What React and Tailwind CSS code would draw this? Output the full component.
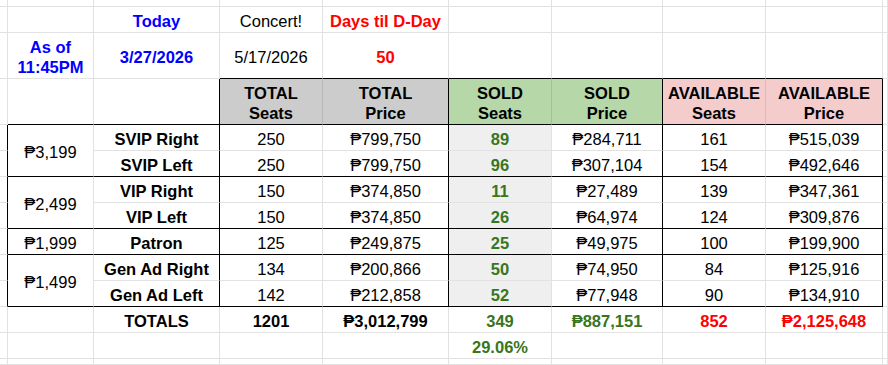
import React from "react";
import clsx from "clsx";

const R = { g: "border-r-[#e2e2e2]", k: "border-r-black", d: "border-r-black/10" };
const B = { g: "border-b-[#e2e2e2]", k: "border-b-black" };

function C({ children, r = "g", b = "g", bg, color, bold, span, two }) {
  return (
    <div
      className={clsx(
        "flex items-center justify-center text-center border-r border-b leading-[20px] overflow-hidden whitespace-nowrap",
        two ? "pt-[2px] whitespace-pre-line" : "pt-[3px]",
        R[r],
        B[b],
        bg,
        color,
        bold && "font-bold",
        span && "row-span-2"
      )}
    >
      {children}
    </div>
  );
}

const BLUE = "text-[#0000ff]";
const RED = "text-[#ff0000]";
const GREEN = "text-[#38761d]";

const groups = [
  {
    price: "₱3,199",
    rows: [
      ["SVIP Right", "250", "₱799,750", "89", "₱284,711", "161", "₱515,039"],
      ["SVIP Left", "250", "₱799,750", "96", "₱307,104", "154", "₱492,646"],
    ],
  },
  {
    price: "₱2,499",
    rows: [
      ["VIP Right", "150", "₱374,850", "11", "₱27,489", "139", "₱347,361"],
      ["VIP Left", "150", "₱374,850", "26", "₱64,974", "124", "₱309,876"],
    ],
  },
  {
    price: "₱1,999",
    rows: [["Patron", "125", "₱249,875", "25", "₱49,975", "100", "₱199,900"]],
  },
  {
    price: "₱1,499",
    rows: [
      ["Gen Ad Right", "134", "₱200,866", "50", "₱74,950", "84", "₱125,916"],
      ["Gen Ad Left", "142", "₱212,858", "52", "₱77,948", "90", "₱134,910"],
    ],
  },
];

function emptyRow(key) {
  return Array.from({ length: 10 }, (_, i) => <C key={key + "-" + i} />);
}

export default function App() {
  const cells = [];
  // row 0
  cells.push(...emptyRow("r0"));
  // row 1
  cells.push(
    <C key="r1c0" />,
    <C key="r1c1" />,
    <C key="r1c2" color={BLUE} bold>Today</C>,
    <C key="r1c3">Concert!</C>,
    <C key="r1c4" color={RED} bold>Days til D-Day</C>,
    <C key="r1c5" />,
    <C key="r1c6" />,
    <C key="r1c7" />,
    <C key="r1c8" />,
    <C key="r1c9" />
  );
  // row 2
  cells.push(
    <C key="r2c0" />,
    <C key="r2c1" color={BLUE} bold two>{"As of\n11:45PM"}</C>,
    <C key="r2c2" color={BLUE} bold>3/27/2026</C>,
    <C key="r2c3" b="k">5/17/2026</C>,
    <C key="r2c4" b="k" color={RED} bold>50</C>,
    <C key="r2c5" b="k" />,
    <C key="r2c6" b="k" />,
    <C key="r2c7" b="k" />,
    <C key="r2c8" b="k" />,
    <C key="r2c9" />
  );
  // row 3 header
  cells.push(
    <C key="r3c0" />,
    <C key="r3c1" b="k" />,
    <C key="r3c2" r="k" b="k" />,
    <C key="r3c3" r="d" b="k" bg="bg-[#cccccc]" bold two>{"TOTAL\nSeats"}</C>,
    <C key="r3c4" r="k" b="k" bg="bg-[#cccccc]" bold two>{"TOTAL\nPrice"}</C>,
    <C key="r3c5" r="d" b="k" bg="bg-[#b6d7a8]" bold two>{"SOLD\nSeats"}</C>,
    <C key="r3c6" r="k" b="k" bg="bg-[#b6d7a8]" bold two>{"SOLD\nPrice"}</C>,
    <C key="r3c7" r="d" b="k" bg="bg-[#f4cccc]" bold two>{"AVAILABLE\nSeats"}</C>,
    <C key="r3c8" r="k" b="k" bg="bg-[#f4cccc]" bold two>{"AVAILABLE\nPrice"}</C>,
    <C key="r3c9" />
  );
  // body
  groups.forEach((g, gi) => {
    g.rows.forEach((row, ri) => {
      const last = ri === g.rows.length - 1;
      const b = last ? "k" : "g";
      const k = `g${gi}r${ri}`;
      cells.push(<C key={k + "c0"} r="k" />);
      if (ri === 0) {
        cells.push(
          <C key={k + "c1"} b="k" span={g.rows.length === 2}>
            {g.price}
          </C>
        );
      }
      cells.push(
        <C key={k + "c2"} r="k" b={b} bold>{row[0]}</C>,
        <C key={k + "c3"} b={b}>{row[1]}</C>,
        <C key={k + "c4"} r="k" b={b}>{row[2]}</C>,
        <C key={k + "c5"} b={b} bg="bg-[#efefef]" color={GREEN} bold>{row[3]}</C>,
        <C key={k + "c6"} r="k" b={b}>{row[4]}</C>,
        <C key={k + "c7"} b={b}>{row[5]}</C>,
        <C key={k + "c8"} r="k" b={b}>{row[6]}</C>,
        <C key={k + "c9"} />
      );
    });
  });
  // totals
  cells.push(
    <C key="t0" />,
    <C key="t1" />,
    <C key="t2" bold>TOTALS</C>,
    <C key="t3" bold>1201</C>,
    <C key="t4" bold>₱3,012,799</C>,
    <C key="t5" color={GREEN} bold>349</C>,
    <C key="t6" color={GREEN} bold>₱887,151</C>,
    <C key="t7" color={RED} bold>852</C>,
    <C key="t8" color={RED} bold>₱2,125,648</C>,
    <C key="t9" />
  );
  cells.push(
    <C key="p0" />,
    <C key="p1" />,
    <C key="p2" />,
    <C key="p3" />,
    <C key="p4" />,
    <C key="p5" color={GREEN} bold>29.06%</C>,
    <C key="p6" />,
    <C key="p7" />,
    <C key="p8" />,
    <C key="p9" />
  );
  cells.push(...emptyRow("last"));

  return (
    <div
      className="w-[888px] h-[365px] overflow-hidden bg-white text-black text-[16.5px] grid grid-cols-[8px_86px_126px_103px_126px_103px_111px_103px_117px_5px] grid-rows-[7px_26px_46px_46px_26px_26px_26px_26px_26px_26px_26px_26px_26px_6px]"
      style={{ fontFamily: '"Liberation Sans", Arial, "DejaVu Sans", sans-serif' }}
    >
      {cells}
    </div>
  );
}
